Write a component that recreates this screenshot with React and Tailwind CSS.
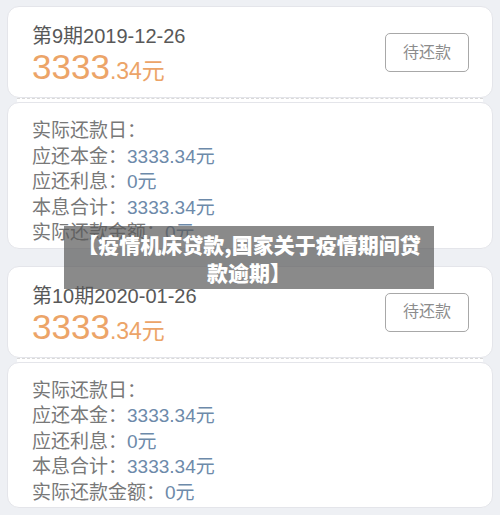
import React from "react"

const font = { fontFamily: '"Liberation Sans", "Noto Sans CJK SC", sans-serif' }

const bills = [
  { period: "第9期2019-12-26" },
  { period: "第10期2020-01-26" },
]

function BillCard({ period }) {
  return (
    <div className="flex flex-col">
      <div className="h-[92px] bg-white rounded-[12px] border border-[#e4e5ea] flex justify-between pl-[24px] pr-[23px] pt-[17px]">
        <div>
          <div className="text-[20px] leading-[24px] text-[#585858]">{period}</div>
          <div className="leading-[38px] text-[#eca468]">
            <span className="text-[35px]">3333</span>
            <span className="text-[23px]">.34元</span>
          </div>
        </div>
        <div className="mt-[9px] w-[84px] h-[39px] border border-[#a8a8a8] rounded-[5px] flex items-center justify-center text-[16px] text-[#8c8c8c]">
          待还款
        </div>
      </div>
      <div className="h-[4px] mx-[10px] bg-white border-t border-dashed border-[#d9d9d9]" />
      <div className="bg-white rounded-[12px] border border-[#e4e5ea] pl-[24px] pt-[15px] pb-[2px] text-[19px] leading-[25.5px] text-[#787878]">
        <div>实际还款日：</div>
        <div>应还本金：<span className="text-[#6d8aaa]">3333.34元</span></div>
        <div>应还利息：<span className="text-[#6d8aaa]">0元</span></div>
        <div>本息合计：<span className="text-[#6d8aaa]">3333.34元</span></div>
        <div>实际还款金额：<span className="text-[#6d8aaa]">0元</span></div>
      </div>
    </div>
  )
}

export default function App() {
  return (
    <div className="relative w-[500px] h-[515px] overflow-hidden bg-[#eef0f4] px-[7px] pt-[6px]" style={font}>
      <div className="flex flex-col gap-[17px]">
        {bills.map((b) => (
          <BillCard key={b.period} period={b.period} />
        ))}
      </div>

      {/* title banner over the cards */}
      <div className="absolute left-[64px] top-[226px] w-[370px] h-[63px] bg-[rgba(88,88,88,0.7)] flex items-center justify-center text-center text-white font-black text-[21px] leading-[28px]">
        <div style={{ fontFamily: '"Noto Sans CJK SC", sans-serif' }}>
          【疫情机床贷款,国家关于疫情期间贷
          <br />
          款逾期】
        </div>
      </div>
    </div>
  )
}
